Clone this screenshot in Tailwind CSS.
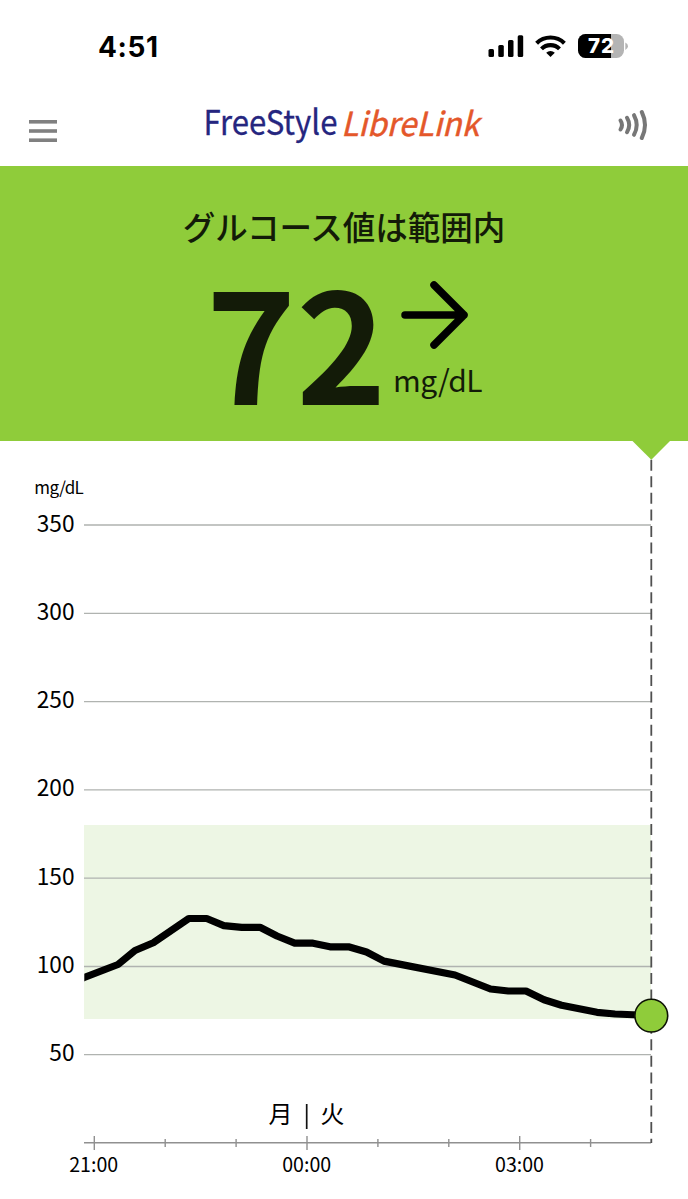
<!DOCTYPE html>
<html lang="ja">
<head>
  <meta charset="UTF-8" />
  <meta name="viewport" content="width=device-width, initial-scale=1.0" />
  <title>FreeStyle LibreLink</title>
  <script src="https://cdn.jsdelivr.net/npm/@tailwindcss/browser@4"></script>
</head>
<body class="h-[1199px] overflow-hidden bg-white font-['Noto_Sans_CJK_JP',sans-serif] text-black antialiased">

  <!-- status bar -->
  <div class="flex h-[92px] items-center justify-between pt-[2px] pl-[98px] pr-[59px]">
    <span class="font-['Inter',sans-serif] text-[28px] leading-none font-bold tracking-[0.6px]">4:51</span>
    <svg class="h-[30px] w-[141px]" viewBox="488 32 141 30">
      <rect x="488.5" y="49" width="5.5" height="8" rx="1.5" />
      <rect x="498.3" y="45" width="5.5" height="12" rx="1.5" />
      <rect x="508" y="40" width="5.5" height="17" rx="1.5" />
      <rect x="517.7" y="35.3" width="5.5" height="21.7" rx="1.5" />
      <g fill="none" stroke="#000" stroke-width="4.1">
        <path d="M536.6 43.2a19.8 19.8 0 0 1 27.8 0" />
        <path d="M541.5 48.9a12.7 12.7 0 0 1 18 0" />
      </g>
      <path d="M550.5 57l-4.3-4.3a6.2 6.2 0 0 1 8.6 0z" />
      <clipPath id="battery"><rect x="578" y="34" width="46" height="24" rx="7.5" /></clipPath>
      <g clip-path="url(#battery)">
        <rect x="578" y="34" width="46" height="24" fill="#b4b4b4" />
        <rect x="578" y="34" width="33" height="24" />
      </g>
      <path d="M625.3 42.5q2.7 1.2 2.7 3.7t-2.7 3.7z" fill="#b4b4b4" />
      <text x="601" y="53.3" text-anchor="middle" font-family="Inter, sans-serif" font-size="20.5" font-weight="800" fill="#fff" textLength="26">72</text>
    </svg>
  </div>

  <!-- app header -->
  <header class="flex h-[74px] items-center justify-between pb-[8px] pl-[29px] pr-[39px]">
    <svg class="mt-[11px] h-6 w-7" viewBox="0 0 28 24" fill="#808080">
      <rect y="1" width="28" height="3.6" />
      <rect y="10.2" width="28" height="3.6" />
      <rect y="19.4" width="28" height="3.6" />
    </svg>
    <svg class="ml-[12px] h-[66px] w-[280px] overflow-visible" viewBox="203 92 280 66">
      <text x="203.5" y="135.3" font-size="34" fill="#25267f" stroke="#25267f" stroke-width=".3" textLength="134" lengthAdjust="spacingAndGlyphs">FreeStyle</text>
      <text x="341" y="136" font-size="33" font-style="italic" fill="#e4572a" stroke="#e4572a" stroke-width=".5" textLength="138" lengthAdjust="spacingAndGlyphs">LibreLink</text>
    </svg>
    <svg class="h-[34px] w-8" viewBox="617 108 32 34" fill="none" stroke="#777" stroke-width="4" stroke-linecap="round">
      <path d="M620.5 120.5q3 4.5 0 9" />
      <path d="M627 117.8q4.4 7.2 0 14.4" />
      <path d="M634 115.2q5.4 9.8 0 19.6" />
      <path d="M641.8 112q6.4 13 0 26" />
    </svg>
  </header>

  <!-- current reading -->
  <section class="flex h-[275px] flex-col items-center bg-[#8fcc3a] text-[#131b08]">
    <h1 class="mt-[36px] text-[32.5px] leading-[48px] font-medium">グルコース値は範囲内</h1>
    <div class="flex h-[150px] w-[280px] items-start">
      <div class="mt-[12px] ml-[2px] w-[187px] text-[153px] leading-[153px] font-bold">72</div>
      <div class="mt-[30px] flex flex-col">
        <svg class="ml-[5px] h-[70px] w-[70px]" viewBox="0 0 70 70" fill="none" stroke="#000" stroke-width="7.5" stroke-linecap="round" stroke-linejoin="round">
          <path d="M7 35h59M36 5l30 30-30 30" />
        </svg>
        <span class="mt-[11px] text-[30px] leading-[36px] tracking-[-0.6px]">mg/dL</span>
      </div>
    </div>
  </section>

  <!-- glucose graph -->
  <svg class="block h-[758px] w-[688px]" viewBox="0 441 688 758">
    <rect x="84" y="825" width="567" height="194" fill="#edf6e4" />
    <g stroke="#b0b3b0" stroke-width="1.3">
      <path d="M84 525H651M84 613.3H651M84 701.6H651M84 789.9H651M84 878.2H651M84 966.5H651M84 1054.6H651" />
    </g>
    <g fill="none" stroke="#909090" stroke-width="1.4">
      <path d="M84 1142.7H651" />
      <path d="M94.3 1136v14M307 1136v14M519.7 1136v14" />
      <path d="M165.2 1139v8M236.1 1139v8M377.9 1139v8M448.8 1139v8M590.6 1139v8" />
    </g>
    <path d="M651.3 459.7V1143" stroke="#505050" stroke-width="1.8" stroke-dasharray="11 5.56" />
    <path d="M632.5 441h37.5L651.3 459.8z" fill="#8fcc3a" />

    <clipPath id="plot"><rect x="84.3" y="800" width="580" height="300" /></clipPath>
    <polyline clip-path="url(#plot)" fill="none" stroke="#000" stroke-width="7.2" stroke-linejoin="round" points="78,980 84.3,977.5 118,964.5 135,950.5 153.3,942.8 188.8,918.5 206.7,918.5 223.8,925.6 241.7,927.3 260,927.3 277,936 294.7,943.2 313,943.2 330,946.8 348.5,946.8 366.5,952 384,961.1 455,975 490.5,989 508.3,991 526,991 544,999.8 561.5,1005.3 597,1012.3 615,1014 651.3,1015.5" />
    <circle cx="651.3" cy="1015.6" r="16.4" fill="#8fcc3a" stroke="#0d1205" stroke-width="1.6" />

    <text x="34.3" y="493.5" font-size="17" textLength="49.5">mg/dL</text>
    <g font-size="22.7" text-anchor="end">
      <text x="74.5" y="531.5">350</text>
      <text x="74.5" y="619.8">300</text>
      <text x="74.5" y="708.1">250</text>
      <text x="74.5" y="796.4">200</text>
      <text x="74.5" y="884.7">150</text>
      <text x="74.5" y="973">100</text>
      <text x="74.5" y="1061.2">50</text>
    </g>
    <g font-size="24">
      <text x="268.5" y="1123">月</text>
      <text x="320.5" y="1123">火</text>
    </g>
    <path d="M306.7 1104v25" stroke="#111" stroke-width="1.7" />
    <g font-size="19.6" text-anchor="middle">
      <text x="93.7" y="1172.3">21:00</text>
      <text x="306.7" y="1172.3">00:00</text>
      <text x="519.5" y="1172.3">03:00</text>
    </g>
  </svg>
</body>
</html>
